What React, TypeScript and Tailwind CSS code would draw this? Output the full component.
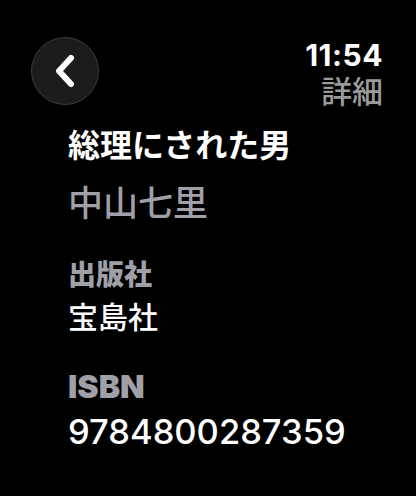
function BackButton() {
  return (
    <button className="w-[68px] h-[68px] rounded-full bg-[#1c1c1e] border border-[#3a3a3c] flex items-center justify-center">
      <svg width="24" height="34" viewBox="0 0 24 34" fill="none">
        <path d="M18 4L6 17L18 30" stroke="#fff" strokeWidth="6" strokeLinecap="round" strokeLinejoin="round" />
      </svg>
    </button>
  );
}

export default function App() {
  return (
    <div className="w-[416px] h-[496px] bg-black text-white overflow-hidden font-['Noto_Sans_CJK_JP',sans-serif]">
      {/* top bar */}
      <div className="flex justify-between pl-[31px] pr-[33px] pt-[37px]">
        <BackButton />
        <div className="flex flex-col items-end">
          <span className="text-[30px] leading-[36px] font-bold tracking-[0.5px] font-['Inter',sans-serif]">11:54</span>
          <span className="text-[31px] leading-[34px] font-medium text-[#9a9a9a]">詳細</span>
        </div>
      </div>

      {/* details */}
      <div className="pl-[68px] mt-[16px]">
        <div className="text-[32px] leading-[40px] font-bold">総理にされた男</div>
        <div className="text-[35px] leading-[46px] font-medium text-[#a0a0a8] mt-[15px]">中山七里</div>

        <div className="text-[28px] leading-[36px] font-black text-[#a0a0a8] mt-[31px]">出版社</div>
        <div className="text-[30px] leading-[40px] font-medium mt-[4px]">宝島社</div>

        <div className="text-[32px] leading-[36px] font-black text-[#a0a0a8] mt-[34px] font-['Inter',sans-serif]">ISBN</div>
        <div className="text-[34.5px] leading-[42px] font-medium mt-[6px] font-['Inter',sans-serif]">9784800287359</div>
      </div>
    </div>
  );
}
